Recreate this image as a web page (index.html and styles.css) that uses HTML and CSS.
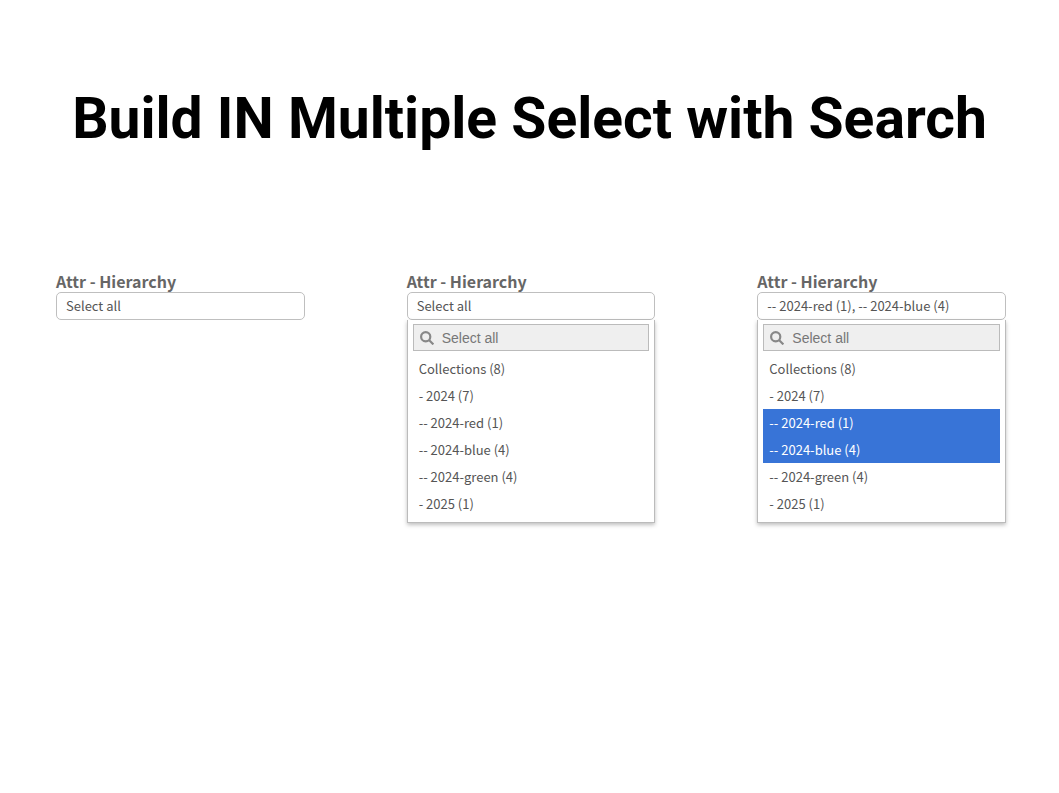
FILE: index.html
```html
<!DOCTYPE html>
<html lang="en">
<head>
    <meta charset="UTF-8">
    <meta name="viewport" content="width=device-width, initial-scale=1.0">
    <title>Build IN Multiple Select with Search</title>

    <link rel="stylesheet" href="styles.css">
</head>
<body>
    <h1 class="title">Build IN Multiple Select with Search</h1>

    <main class="examples">
        <!-- closed -->
        <div class="field">
            <label class="field_label" for="select-1">Attr - Hierarchy</label>
            <button class="field_value" id="select-1" type="button" aria-expanded="false">Select all</button>
        </div>

        <!-- open, nothing picked -->
        <div class="field">
            <label class="field_label" for="select-2">Attr - Hierarchy</label>
            <button class="field_value" id="select-2" type="button" aria-expanded="true">Select all</button>
            <div class="dropdown">
                <div class="search">
                    <svg class="search_icon" viewBox="0 0 14 14" aria-hidden="true">
                        <circle cx="5.7" cy="5.7" r="4.6"/>
                        <path d="M9 9l4.4 4.4"/>
                    </svg>
                    <input class="search_input" type="text" placeholder="Select all" aria-label="Search">
                </div>
                <select class="options" multiple size="6" aria-label="Attr - Hierarchy">
                    <option>Collections (8)</option>
                    <option>- 2024 (7)</option>
                    <option>-- 2024-red (1)</option>
                    <option>-- 2024-blue (4)</option>
                    <option>-- 2024-green (4)</option>
                    <option>- 2025 (1)</option>
                </select>
            </div>
        </div>

        <!-- open, two options picked -->
        <div class="field">
            <label class="field_label" for="select-3">Attr - Hierarchy</label>
            <button class="field_value" id="select-3" type="button" aria-expanded="true">-- 2024-red (1), -- 2024-blue (4)</button>
            <div class="dropdown">
                <div class="search">
                    <svg class="search_icon" viewBox="0 0 14 14" aria-hidden="true">
                        <circle cx="5.7" cy="5.7" r="4.6"/>
                        <path d="M9 9l4.4 4.4"/>
                    </svg>
                    <input class="search_input" type="text" placeholder="Select all" aria-label="Search">
                </div>
                <select class="options" multiple size="6" aria-label="Attr - Hierarchy">
                    <option>Collections (8)</option>
                    <option>- 2024 (7)</option>
                    <option selected>-- 2024-red (1)</option>
                    <option selected>-- 2024-blue (4)</option>
                    <option>-- 2024-green (4)</option>
                    <option>- 2025 (1)</option>
                </select>
            </div>
        </div>
    </main>
</body>
</html>
```
FILE: styles.css
```css
*
{
    box-sizing: border-box;
}

body
{
    min-height: 100vh;
    margin: 0px;
    padding-top: 85px;
    background-color: #ffffff;
    color: #555555;
    font-family: "Noto Sans CJK SC", "Open Sans", sans-serif;
    font-size: 13px;
}

.title
{
    margin: 0px 0px 119px;
    color: #000000;
    font-family: Roboto, sans-serif;
    font-size: 57px;
    font-weight: 700;
    line-height: 68px;
    text-align: center;
}

.examples
{
    display: grid;
    grid-template-columns: repeat(3, 1fr);
    align-items: start;
    column-gap: 102px;
    padding: 0px 53px 0px 56px;
}

.field
{
    display: flex;
    flex-direction: column;
}

.field_label
{
    margin-bottom: 2px;
    color: #666666;
    font-size: 16px;
    font-weight: 700;
    line-height: 18px;
}

.field_value
{
    height: 28px;
    padding: 0px 9px;
    border: 1px solid #bfbfbf;
    border-radius: 5px;
    background-color: #ffffff;
    color: #555555;
    font: inherit;
    line-height: 26px;
    text-align: left;
}

.dropdown
{
    padding: 4px 5px 5px;
    border: 1px solid #bbbbbb;
    border-top: none;
    box-shadow: 0px 2px 4px rgba(0, 0, 0, 0.25);
}

.search
{
    display: flex;
    align-items: center;
    gap: 8px;
    height: 27px;
    padding: 0px 6px;
    border: 1px solid #bbbbbb;
    background-color: #efefef;
}

.search_icon
{
    flex: none;
    width: 14px;
    height: 14px;
    fill: none;
    stroke: #888888;
    stroke-width: 2.2;
}

.search_input
{
    flex: 1;
    min-width: 0px;
    padding: 0px;
    border: none;
    outline: none;
    background: none;
    font-family: "Liberation Sans", Arial, sans-serif;
    font-size: 14px;
}

.search_input::placeholder
{
    color: #777777;
}

.options
{
    width: 100%;
    height: 162px;
    margin-top: 4px;
    padding: 0px;
    border: none;
    outline: none;
    overflow: hidden;
    background-color: #ffffff;
    color: #555555;
    font: inherit;
    vertical-align: top;
}

.options option
{
    height: 27px;
    min-height: 27px;
    padding: 4px 6px;
}

.options option:checked
{
    background: #3874d7 linear-gradient(#3874d7, #3874d7);
    color: #ffffff;
    -webkit-text-fill-color: #ffffff;
}
```
